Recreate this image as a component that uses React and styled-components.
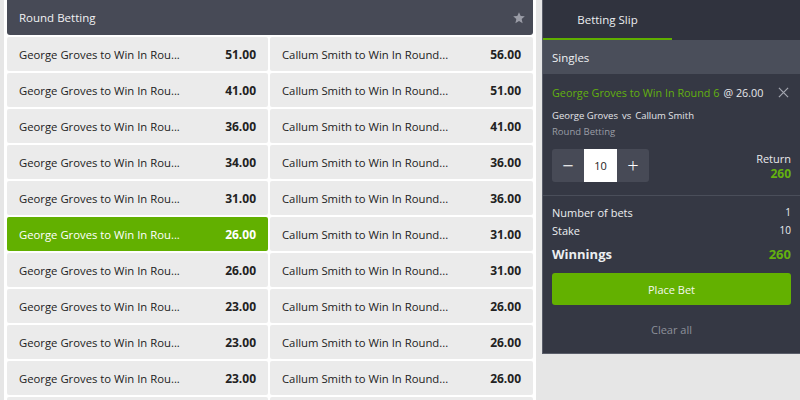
import React from "react";
import styled, { createGlobalStyle } from "styled-components";

const Global = createGlobalStyle`
  html, body { margin: 0; padding: 0; background: #e6e6e6; }
  body { font-family: "Open Sans", "Noto Sans", sans-serif; overflow: hidden; }
  * { box-sizing: border-box; }
`;

const Page = styled.div`
  display: flex;
  align-items: flex-start;
  gap: 6px;
  padding-left: 4px;
  width: 800px;
  height: 400px;
  overflow: hidden;
`;

const Market = styled.div`
  width: 532px;
  background: #fff;
  padding: 0 3px;
  display: flex;
  flex-direction: column;
  gap: 2px;
`;

const MarketHeader = styled.div`
  height: 35px;
  background: #474a56;
  border-radius: 0 0 3px 3px;
  display: flex;
  align-items: center;
  justify-content: space-between;
  padding: 0 7px 0 12px;
  color: #f1f1f3;
  font-size: 11.5px;
`;

const Grid = styled.div`
  display: grid;
  grid-template-columns: 261px 263px;
  gap: 2px;
`;

const Cell = styled.div`
  height: 34px;
  display: flex;
  align-items: center;
  justify-content: space-between;
  padding: 0 12px;
  font-size: 11.3px;
  border-radius: 2px;
  background: ${(p) => (p.$active ? "#62b000" : "#ebebeb")};
  color: ${(p) => (p.$active ? "#fff" : "#222")};
`;

const Odds = styled.span`
  font-weight: 700;
  font-size: 12px;
`;

const Slip = styled.div`
  width: 258px;
  height: 354px;
  background: #353844;
  border-left: 1px solid #5a5e6a;
  border-bottom: 1px solid #5a5e6a;
  display: flex;
  flex-direction: column;
  color: #e8e9ec;
`;

const Tabs = styled.div`
  height: 40px;
  background: #30333e;
  display: flex;
`;

const Tab = styled.div`
  width: 129px;
  display: flex;
  align-items: center;
  justify-content: center;
  font-size: 11.5px;
  color: #eceef0;
  border-bottom: 2px solid #5fae00;
  padding-top: 1px;
`;

const SectionBar = styled.div`
  height: 34px;
  background: #4a4e5a;
  display: flex;
  align-items: center;
  padding-left: 9px;
  font-size: 11.5px;
  color: #eef0f2;
`;

const Selection = styled.div`
  padding: 9px 9px 0 9px;
  display: flex;
  flex-direction: column;
`;

const SelTop = styled.div`
  display: flex;
  align-items: center;
  justify-content: space-between;
  height: 18px;
  font-size: 10.8px;
`;

const SelName = styled.span`
  color: #63b10f;
`;

const At = styled.span`
  color: #e8e9ec;
  margin-left: 4px;
`;

const Close = styled.span`
  display: flex;
  align-items: center;
  margin-right: 2px;
`;

const Event = styled.div`
  margin-top: 8px;
  font-size: 9.5px;
  color: #e3e4e8;
`;

const Vs = styled.span`
  margin: 0 4px;
`;

const MarketName = styled.div`
  margin-top: 3px;
  font-size: 9.5px;
  color: #9a9da6;
`;

const StakeRow = styled.div`
  display: flex;
  justify-content: space-between;
  align-items: center;
  margin: 11px -9px 0 -9px;
  padding: 0 9px 13px 9px;
  border-bottom: 1px solid #4a4e5a;
`;

const Stepper = styled.div`
  display: flex;
  width: 97px;
  height: 33px;
  background: #474a56;
  border-radius: 3px;
  overflow: hidden;
`;

const StepBtn = styled.div`
  width: 32px;
  display: flex;
  align-items: center;
  justify-content: center;
  color: #fff;
  font-size: 20px;
  font-weight: 300;
`;

const StakeInput = styled.div`
  width: 33px;
  background: #fff;
  color: #222;
  font-size: 11px;
  display: flex;
  align-items: center;
  justify-content: center;
`;

const ReturnBox = styled.div`
  display: flex;
  flex-direction: column;
  align-items: flex-end;
  gap: 0;
`;

const ReturnLabel = styled.div`
  font-size: 11px;
  line-height: 15px;
`;

const ReturnValue = styled.div`
  color: #63b10f;
  font-weight: 700;
  font-size: 12px;
  line-height: 15px;
`;

const Green = styled.span`
  color: #63b10f;
  font-weight: 700;
  font-size: 13px;
`;

const Summary = styled.div`
  padding: 7px 9px 0 9px;
  display: flex;
  flex-direction: column;
`;

const SumRow = styled.div`
  display: flex;
  justify-content: space-between;
  align-items: center;
  height: ${(p) => (p.$big ? "30px" : "18px")};
  font-size: ${(p) => (p.$big ? "13px" : "11px")};
  font-weight: ${(p) => (p.$big ? 700 : 400)};
  color: #eceef0;
`;

const SmallNum = styled.span`
  font-size: 10px;
`;

const PlaceBet = styled.div`
  margin-top: 4px;
  height: 32px;
  background: #63b100;
  border-radius: 3px;
  display: flex;
  align-items: center;
  justify-content: center;
  font-size: 11px;
  color: #f4f8ee;
`;

const ClearAll = styled.div`
  margin-top: 17px;
  text-align: center;
  font-size: 11px;
  color: #8d909a;
`;

const Star = () => (
  <svg width="14" height="14" viewBox="0 0 24 24">
    <path
      d="M12 2l2.9 6.6 7.1.6-5.4 4.7 1.6 7-6.2-3.7-6.2 3.7 1.6-7L2 9.2l7.1-.6z"
      fill="#9a9ca6"
    />
  </svg>
);

const X = () => (
  <svg width="11" height="11" viewBox="0 0 12 12">
    <path d="M1 1L11 11M11 1L1 11" stroke="#a4a7b0" strokeWidth="1.3" />
  </svg>
);

const left = ["51.00", "41.00", "36.00", "34.00", "31.00", "26.00", "26.00", "23.00", "23.00", "23.00", "21.00"];
const right = ["56.00", "51.00", "41.00", "36.00", "36.00", "31.00", "31.00", "26.00", "26.00", "26.00", "26.00"];

export default function App() {
  return (
    <>
      <Global />
      <Page>
        <Market>
          <MarketHeader>
            <span>Round Betting</span>
            <Star />
          </MarketHeader>
          <Grid>
            {left.map((l, i) => (
              <React.Fragment key={i}>
                <Cell $active={i === 5}>
                  <span>George Groves to Win In Rou...</span>
                  <Odds>{l}</Odds>
                </Cell>
                <Cell>
                  <span>Callum Smith to Win In Round...</span>
                  <Odds>{right[i]}</Odds>
                </Cell>
              </React.Fragment>
            ))}
          </Grid>
        </Market>
        <Slip>
          <Tabs>
            <Tab>Betting Slip</Tab>
          </Tabs>
          <SectionBar>Singles</SectionBar>
          <Selection>
            <SelTop>
              <span>
                <SelName>George Groves to Win In Round 6</SelName>
                <At>@ 26.00</At>
              </span>
              <Close>
                <X />
              </Close>
            </SelTop>
            <Event>
              George Groves<Vs>vs</Vs>Callum Smith
            </Event>
            <MarketName>Round Betting</MarketName>
            <StakeRow>
              <Stepper>
                <StepBtn>−</StepBtn>
                <StakeInput>10</StakeInput>
                <StepBtn>+</StepBtn>
              </Stepper>
              <ReturnBox>
                <ReturnLabel>Return</ReturnLabel>
                <ReturnValue>260</ReturnValue>
              </ReturnBox>
            </StakeRow>
          </Selection>
          <Summary>
            <SumRow>
              <span>Number of bets</span>
              <SmallNum>1</SmallNum>
            </SumRow>
            <SumRow>
              <span>Stake</span>
              <SmallNum>10</SmallNum>
            </SumRow>
            <SumRow $big>
              <span>Winnings</span>
              <Green>260</Green>
            </SumRow>
            <PlaceBet>Place Bet</PlaceBet>
            <ClearAll>Clear all</ClearAll>
          </Summary>
        </Slip>
      </Page>
    </>
  );
}
